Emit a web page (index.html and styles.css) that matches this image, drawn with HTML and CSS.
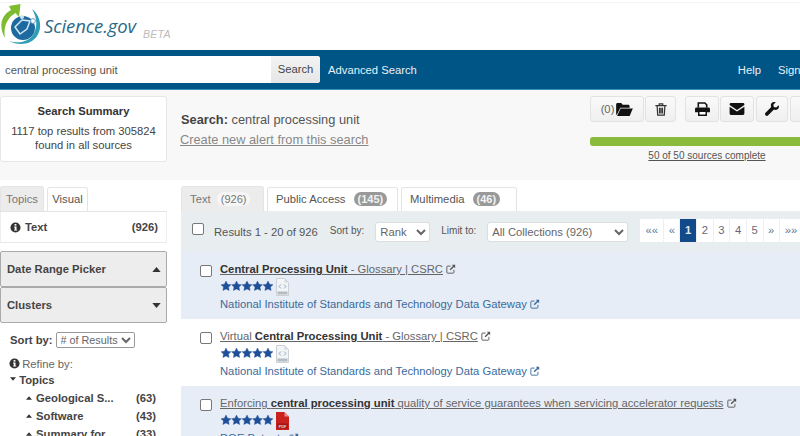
FILE: index.html
```html
<!DOCTYPE html>
<html>
  <head>
    <meta charset="utf-8">
    <meta name="viewport" content="width=device-width, initial-scale=1">
    <title>Science.gov</title>
    <link rel="stylesheet" href="styles.css">
  </head>
  <body>
    <svg class="sprites" width="0" height="0">
      <symbol id="ext" viewBox="0 0 12 12">
        <path d="M9.500 7v3a1 1 0 0 1-1 1H2a1 1 0 0 1-1-1V3.500a1 1 0 0 1 1-1h3.500" fill="none" stroke="currentColor" stroke-width="1.100"/>
        <path d="M7 1h4v4L9.600 3.600 5.600 7.600 4.400 6.400l4-4z" fill="currentColor"/>
      </symbol>
      <symbol id="info" viewBox="0 0 12 12">
        <circle cx="6" cy="6" r="5.500" fill="currentColor"/>
        <rect x="5" y="2.200" width="2" height="1.800" fill="#fff"/>
        <path d="M4.400 5h2.700v3.400h.8v1H4.400v-1h.8V6h-.8z" fill="#fff"/>
      </symbol>
      <symbol id="stars" viewBox="0 0 52 10">
        <path id="star" d="M5 0l1.600 3.200 3.400.5-2.500 2.400.6 3.400-3.100-1.600-3.100 1.600.6-3.400L0 3.700l3.400-.5z" fill="currentColor" stroke="currentColor" stroke-width=".4"/>
        <use href="#star" x="10.500"/>
        <use href="#star" x="21"/>
        <use href="#star" x="31.500"/>
        <use href="#star" x="42"/>
      </symbol>
      <symbol id="html" viewBox="0 0 13 18">
        <path d="M.5.500h8l4 4v13H.5z" fill="#f2f5f8" stroke="#ccd1d6"/>
        <path d="M8.500.500v4h4z" fill="#d5d9dd"/>
        <path d="M5 6.500L3 8.500l2 2M8 6.500l2 2-2 2" fill="none" stroke="#7d8f9e" stroke-width=".8"/>
        <rect x="1.500" y="13.500" width="10" height="3" fill="#b4bbc1"/>
      </symbol>
      <symbol id="pdf" viewBox="0 0 13 18">
        <path d="M0 0h8.500L13 4.500V18H0z" fill="#c9211e"/>
        <path d="M8.500 0v4.500H13z" fill="#ee8f8c"/>
        <rect x="1" y="11.500" width="11" height="5" fill="#a31614"/>
        <text class="pdf-label" x="6.500" y="15.500">PDF</text>
      </symbol>
      <symbol id="caret-up" viewBox="0 0 10 6"><path d="M0 6l5-6 5 6z" fill="currentColor"/></symbol>
      <symbol id="caret-down" viewBox="0 0 10 6"><path d="M0 0l5 6 5-6z" fill="currentColor"/></symbol>
    </svg>

    <div class="page">
      <header class="brand">
        <svg class="logo" width="42" height="45" viewBox="0 3 42 45">
          <path d="M5 38C-1 28 0 16 11 10L9 6l11.500-2L19 17l-3.500-4C7 18 3 27 5 38z" fill="#7dbb2f"/>
          <path d="M32 9c8 6 11 18 5 27-6 9-18 10-28 5 9 3 19 1 24-6 5-8 4-18-1-26z" fill="#2f9db5"/>
          <circle cx="23" cy="28" r="12" fill="#1d6aa0"/>
          <path d="M15 27l7-7 8 1-3 8-7 5z" fill="none" stroke="#d3e6f1" stroke-width="1.500"/>
          <circle cx="22" cy="17" r="2" fill="#d3e6f1"/>
          <circle cx="33" cy="21" r="2.400" fill="#fff" stroke="#6f9fc0"/>
        </svg>
        <span class="brand-name">Science.gov</span>
        <span class="brand-beta">BETA</span>
      </header>

      <nav class="navbar">
        <div class="search-box">
          <input class="search-input" type="text" value="central processing unit">
          <span class="search-btn">Search</span>
        </div>
        <a class="nav-link">Advanced Search</a>
        <span class="nav-right">
          <a class="nav-link">Help</a>
          <a class="nav-link">Sign In</a>
        </span>
      </nav>

      <section class="band">
        <div class="summary">
          <strong>Search Summary</strong>
          <p>1117 top results from 305824<br>found in all sources</p>
        </div>
        <div class="query">
          <div class="query-line"><b>Search:</b> central processing unit</div>
          <a class="alert-link">Create new alert from this search</a>
        </div>
        <div class="tools">
          <div class="tool-row">
            <span class="tool tool-saved">(0)
              <svg width="17" height="13" viewBox="0 0 18 14"><path d="M0 13V1.500C0 .7.7 0 1.500 0h4L7 2h6c.8 0 1.500.7 1.500 1.500V5H4.500L1 12z" fill="#111"/><path d="M4.800 6H18l-3.500 8H1z" fill="#111"/></svg>
            </span>
            <span class="tool tool-trash">
              <svg width="12" height="13" viewBox="0 0 13 15"><path d="M0 3h13M4.500 3V1h4v2M2 3l.7 11h7.600L11 3M4.800 5.500v6.500M6.500 5.500v6.500M8.200 5.500v6.500" fill="none" stroke="#333" stroke-width="1.400"/></svg>
            </span>
            <span class="tool tool-print">
              <svg width="15" height="14" viewBox="0 0 16 15"><path d="M3.500 6V1h7l2 2v3" fill="none" stroke="#111" stroke-width="1.700"/><path d="M1.500 6h13A1.500 1.500 0 0 1 16 7.500V11H0V7.500A1.500 1.500 0 0 1 1.500 6z" fill="#111"/><path d="M4 10h8v4.200H4z" fill="#fff" stroke="#111" stroke-width="1.600"/></svg>
            </span>
            <span class="tool tool-mail">
              <svg width="16" height="12" viewBox="0 0 16 13"><path d="M1.500 0h13A1.500 1.500 0 0 1 16 1.500v.8L8 7.500 0 2.300v-.8A1.500 1.500 0 0 1 1.500 0z" fill="#111"/><path d="M0 4l8 5.200L16 4v7.500a1.500 1.500 0 0 1-1.500 1.500h-13A1.500 1.500 0 0 1 0 11.500z" fill="#111"/></svg>
            </span>
            <span class="tool tool-wrench">
              <svg width="14" height="14" viewBox="0 0 15 15"><path d="M14.700 3.500l-2.700 2.500-2.500-.6-.6-2.500L11.500.2C9.500-.4 7.500.2 6.700 1.800c-.6 1.200-.6 2.500 0 3.500L.6 11.500c-.8.8-.8 2 0 2.800.8.800 2 .8 2.800 0l6.200-6.200c1.100.6 2.400.5 3.500-.1 1.600-.9 2.200-2.700 1.600-4.500z" fill="#111"/></svg>
            </span>
            <span class="tool tool-more"></span>
          </div>
          <div class="progress"></div>
          <a class="progress-label">50 of 50 sources complete</a>
        </div>
      </section>

      <main class="content">
        <aside class="side">
          <div class="tabs side-tabs">
            <span class="tab tab-active">Topics</span>
            <span class="tab">Visual</span>
          </div>
          <div class="side-panel">
            <div class="side-text">
              <svg class="ico"><use href="#info"/></svg>
              <b>Text</b>
              <b class="count">(926)</b>
            </div>
            <div class="accordion">
              <b>Date Range Picker</b>
              <svg class="caret"><use href="#caret-up"/></svg>
            </div>
            <div class="accordion">
              <b>Clusters</b>
              <svg class="caret"><use href="#caret-down"/></svg>
            </div>
            <div class="sort-row">
              <b>Sort by:</b>
              <select class="side-select"><option># of Results</option></select>
            </div>
            <div class="refine"><svg class="ico"><use href="#info"/></svg> Refine by:</div>
            <div class="topic-head"><svg class="mini"><use href="#caret-down"/></svg> <b>Topics</b></div>
            <div class="topic"><svg class="mini"><use href="#caret-up"/></svg> <b>Geological S...</b><b class="count">(63)</b></div>
            <div class="topic"><svg class="mini"><use href="#caret-up"/></svg> <b>Software</b><b class="count">(43)</b></div>
            <div class="topic"><svg class="mini"><use href="#caret-up"/></svg> <b>Summary for</b><b class="count">(33)</b></div>
          </div>
        </aside>

        <div class="results">
          <div class="tabs result-tabs">
            <span class="tab tab-active tab-text">Text <em class="pill pill-plain">(926)</em></span>
            <span class="tab tab-public">Public Access <em class="pill">(145)</em></span>
            <span class="tab tab-media">Multimedia <em class="pill">(46)</em></span>
          </div>

          <div class="result-bar">
            <input class="check top-check" type="checkbox">
            <span class="range">Results 1 - 20 of 926</span>
            <label class="bar-label bar-sort">Sort by:</label>
            <select class="bar-select select-rank"><option>Rank</option></select>
            <label class="bar-label bar-limit">Limit to:</label>
            <select class="bar-select select-limit"><option>All Collections (926)</option></select>
            <div class="pager">
              <a class="wide">««</a><a class="mid">«</a><a class="on">1</a><a>2</a><a>3</a><a>4</a><a>5</a><a class="mid">»</a><a class="wide">»»</a>
            </div>
          </div>

          <article class="hit hit-tint">
            <input class="check" type="checkbox">
            <div class="hit-body">
              <div class="hit-title"><a><b>Central Processing Unit</b> - Glossary | CSRC</a> <svg class="ext"><use href="#ext"/></svg></div>
              <div class="hit-meta"><svg class="stars"><use href="#stars"/></svg><svg class="file"><use href="#html"/></svg></div>
              <div class="hit-source">National Institute of Standards and Technology Data Gateway <svg class="ext"><use href="#ext"/></svg></div>
            </div>
          </article>

          <article class="hit">
            <input class="check" type="checkbox">
            <div class="hit-body">
              <div class="hit-title"><a>Virtual <b>Central Processing Unit</b> - Glossary | CSRC</a> <svg class="ext"><use href="#ext"/></svg></div>
              <div class="hit-meta"><svg class="stars"><use href="#stars"/></svg><svg class="file"><use href="#html"/></svg></div>
              <div class="hit-source">National Institute of Standards and Technology Data Gateway <svg class="ext"><use href="#ext"/></svg></div>
            </div>
          </article>

          <article class="hit hit-tint">
            <input class="check" type="checkbox">
            <div class="hit-body">
              <div class="hit-title"><a>Enforcing <b>central processing unit</b> quality of service guarantees when servicing accelerator requests</a> <svg class="ext"><use href="#ext"/></svg></div>
              <div class="hit-meta"><svg class="stars"><use href="#stars"/></svg><svg class="file"><use href="#pdf"/></svg></div>
              <div class="hit-source">DOE Patents <svg class="ext"><use href="#ext"/></svg></div>
            </div>
          </article>
        </div>
      </main>
    </div>
  </body>
</html>
```

FILE: styles.css
```css
html, body {
  margin: 0;
  height: 100%;
  overflow: hidden;
}

body {
  background: #fff;
  color: #444;
  font-family: "Liberation Sans", Arial, sans-serif;
  font-size: 11.250px;
}

.sprites {
  display: block;
  height: 0;
}

.page {
  width: 860px;
}

.brand {
  height: 47px;
  margin-top: 2px;
  border-top: 1px solid #f4f4f4;
  display: flex;
  align-items: flex-start;
}

.logo {
  flex: none;
}

.brand-name {
  margin: 10px 0 0 2px;
  color: #2c6a88;
  font-family: "Open Sans", sans-serif;
  font-size: 18.500px;
  font-style: italic;
  letter-spacing: -0.1px;
}

.brand-beta {
  margin: 25px 0 0 7px;
  color: #bbb;
  font-size: 10.500px;
  font-style: italic;
  letter-spacing: 0.3px;
}

.navbar {
  height: 40px;
  background: #005587;
  border-bottom: 1px solid #3b8fb5;
  box-sizing: border-box;
  display: flex;
  align-items: center;
}

.search-box {
  display: flex;
  height: 27px;
  width: 320px;
  background: #fff;
  border-radius: 0 3px 3px 0;
  margin-right: 8px;
  overflow: hidden;
}

.search-input {
  flex: 1;
  min-width: 0;
  border: 0;
  padding: 0 0 0 5px;
  font: 11.250px "Liberation Sans", sans-serif;
  color: #555;
}

.search-btn {
  width: 49px;
  flex: none;
  background: linear-gradient(#f3f3f3, #e6e6e6);
  color: #444;
  text-align: center;
  line-height: 27px;
}

.nav-link {
  color: #e8f1f6;
  white-space: nowrap;
}

.nav-right {
  display: flex;
  gap: 17px;
  margin-left: 321px;
}

.band {
  height: 90px;
  background: #f8f8f8;
  display: flex;
  align-items: flex-start;
}

.summary {
  width: 167px;
  height: 66px;
  margin-top: 6px;
  background: #fff;
  border: 1px solid #e6e6e6;
  border-radius: 3px;
  box-sizing: border-box;
  text-align: center;
  padding-top: 8px;
}

.summary strong {
  color: #333;
}

.summary p {
  margin: 7px 0 0;
  line-height: 14px;
}

.query {
  margin: 22px 0 0 14px;
  width: 409px;
  font-size: 12.800px;
}

.query-line {
  height: 20px;
  line-height: 15px;
  color: #555;
}

.query-line b {
  color: #444;
}

.alert-link {
  color: #888;
  text-decoration: underline;
  margin-left: -1px;
}

.tools {
  margin-top: 6px;
  width: 260px;
}

.tool-row {
  display: flex;
  height: 26px;
}

.tool {
  display: flex;
  align-items: center;
  justify-content: center;
  gap: 2px;
  background: linear-gradient(#fafafa, #efefef);
  border: 1px solid #e2e2e2;
  border-radius: 3px;
  box-sizing: border-box;
  color: #666;
}

.tool-saved { width: 54px; }
.tool-trash { width: 31px; margin: 0 9px 0 1px; }
.tool-print { width: 34px; }
.tool-mail { width: 34px; margin-left: 1px; }
.tool-wrench { width: 32px; margin-left: 2px; }
.tool-more { width: 40px; margin-left: 2px; }

.progress {
  height: 9px;
  margin-top: 15px;
  background: #8abb3c;
  border-radius: 3px;
}

.progress-label {
  display: block;
  width: 234px;
  margin-top: 4px;
  text-align: center;
  color: #555;
  font-size: 10px;
  line-height: 12px;
  text-decoration: underline;
}

.content {
  display: flex;
  padding-top: 6px;
}

.side {
  width: 167px;
  flex: none;
}

.tabs {
  display: flex;
  height: 25px;
  align-items: flex-end;
}

.tab {
  height: 24px;
  box-sizing: border-box;
  padding: 0 7px;
  line-height: 23px;
  background: #fff;
  border: 1px solid #e4e4e4;
  border-bottom: 0;
  border-radius: 3px 3px 0 0;
  color: #555;
  white-space: nowrap;
}

.tab-active {
  background: #ececec;
  color: #777;
  height: 25px;
  line-height: 25px;
}

.side-tabs {
  gap: 3px;
}

.side-tabs .tab-active {
  width: 44px;
  padding: 0;
  text-align: center;
}

.side-tabs .tab:nth-child(2) {
  width: 41px;
  padding: 0;
  text-align: center;
}

.side-panel {
  border-top: 1px solid #e4e4e4;
  color: #444;
}

.side-text {
  height: 30px;
  display: flex;
  align-items: center;
  gap: 4px;
  padding: 0 8px 0 9px;
  border-bottom: 1px solid #e8e8e8;
  border-left: 1px solid #eee;
  border-right: 1px solid #eee;
}

.count {
  margin-left: auto;
}

.ico {
  width: 11px;
  height: 11px;
  flex: none;
  color: #333;
}

.accordion {
  height: 36px;
  display: flex;
  align-items: center;
  justify-content: space-between;
  padding: 0 5px 0 6px;
  background: #ededed;
  border: 1px solid #aaa;
  border-radius: 2px;
  box-sizing: border-box;
}

.side-text + .accordion {
  margin-top: 8px;
}

.caret {
  width: 9px;
  height: 5px;
  color: #333;
}

.sort-row {
  display: flex;
  align-items: center;
  gap: 3px;
  margin: 9px 0 0 10px;
  height: 16px;
}

.side-select {
  width: 79px;
  height: 16px;
  padding: 0;
  font: 10.800px "Liberation Sans", sans-serif;
  color: #666;
  background: #fff;
  border: 1px solid #999;
  border-radius: 2px;
}

.refine {
  margin: 9px 0 0 9px;
  height: 14px;
  line-height: 15px;
  color: #666;
}

.refine .ico {
  vertical-align: -1px;
  margin-right: -1px;
}

.topic-head {
  margin-left: 10px;
  height: 18px;
  line-height: 18px;
}

.topic {
  display: flex;
  align-items: center;
  gap: 4px;
  height: 18px;
  margin: 0 11px 0 26px;
}

.mini {
  width: 6px;
  height: 4px;
  color: #333;
  vertical-align: 3px;
}

.results {
  margin-left: 14px;
  flex: 1;
}

.result-tabs {
  gap: 3px;
}

.tab-text { width: 83px; }
.tab-public { width: 131px; }
.tab-media { width: 116px; }

.result-tabs .tab {
  padding-left: 8px;
}

.pill {
  display: inline-block;
  margin-left: 5px;
  padding: 0 4px;
  background: #999;
  color: #f1f1f1;
  font-style: normal;
  font-size: 11px;
  font-weight: bold;
  line-height: 14px;
  border-radius: 8px;
}

.pill-plain {
  margin-left: 3px;
  background: #f6f6f6;
  color: #777;
  font-weight: normal;
}

.result-bar {
  height: 41px;
  display: flex;
  align-items: center;
  background: #e8edf0;
}

.check {
  appearance: none;
  width: 12px;
  height: 12px;
  margin: 0;
  flex: none;
  background: #fff;
  border: 1px solid #777;
  border-radius: 2px;
}

.top-check {
  margin: -6px 0 0 11px;
}

.range {
  margin-left: 10px;
  color: #555;
}

.bar-label {
  color: #555;
  font-size: 10px;
  margin-top: -3px;
}

.bar-sort { margin-left: 12px; }
.bar-limit { margin-left: 11px; }

.bar-select {
  height: 20px;
  margin-left: 11px;
  padding: 0;
  background: #fff;
  border: 1px solid #ddd;
  border-radius: 3px;
  color: #666;
  font: 11.250px "Liberation Sans", sans-serif;
}

.select-rank { width: 55px; }
.select-limit { width: 141px; }

.pager {
  display: flex;
  margin: -3px 0 0 12px;
  height: 23px;
  background: #fff;
}

.pager a {
  width: 16.670px;
  box-sizing: border-box;
  text-align: center;
  line-height: 23px;
  color: #667;
  border-right: 1px solid #edf0f2;
}

.pager .wide { width: 24px; color: #5d7a9b; }
.pager .mid { width: 16px; color: #5d7a9b; }

.pager .on {
  background: #124a8a;
  color: #dfe8f1;
  font-weight: bold;
}

.hit {
  display: flex;
  height: 67px;
  padding: 10px 0 0 19px;
  box-sizing: border-box;
}

.hit-tint {
  background: #e6edf6;
}

.hit .check {
  margin: 3px 8px 0 0;
}

.hit-title {
  height: 15px;
  line-height: 15px;
  white-space: nowrap;
  color: #666;
}

.hit-title a {
  text-decoration: underline;
}

.hit-title b {
  color: #333;
}

.ext {
  width: 10px;
  height: 10px;
  color: #555;
  vertical-align: -1px;
}

.hit-meta {
  display: flex;
  align-items: flex-start;
  height: 20px;
  gap: 3px;
  margin-left: 1px;
}

.stars {
  width: 52px;
  height: 10px;
  margin-top: 4px;
  color: #1f4f98;
}

.file {
  width: 13px;
  height: 18px;
  margin-top: 1px;
}

.pdf-label {
  fill: #f3d0cf;
  font-size: 4px;
  font-weight: bold;
  text-anchor: middle;
}

.hit-source {
  margin-top: 1px;
  color: #3c6a9a;
  white-space: nowrap;
}

.hit-source .ext {
  color: #3c6a9a;
}
```
